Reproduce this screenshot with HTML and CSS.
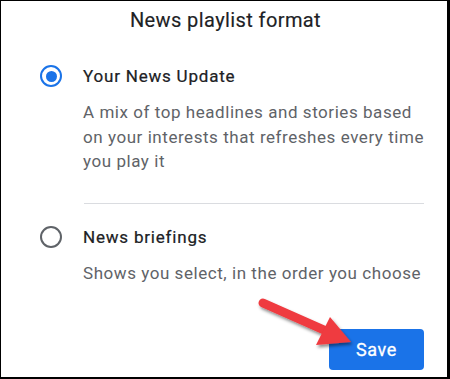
FILE: index.html
```html
<!DOCTYPE html>
<html>
<head>
<meta charset="utf-8">
<link rel="stylesheet" href="styles.css">
</head>
<body>
<div class="frame">
  <h1 class="title">News playlist format</h1>
  <div class="option">
    <span class="radio radio-on"></span>
    <div class="label">Your News Update</div>
    <div class="desc">A mix of top headlines and stories based on your interests that refreshes every time you play it</div>
  </div>
  <div class="divider"></div>
  <div class="option option-2">
    <span class="radio"></span>
    <div class="label">News briefings</div>
    <div class="desc">Shows you select, in the order you choose</div>
  </div>
  <div class="actions">
    <button class="save">Save</button>
  </div>
  <svg class="arrow" width="450" height="379" viewBox="0 0 450 379">
    <defs>
      <filter id="sh" x="-20%" y="-20%" width="140%" height="140%">
        <feDropShadow dx="1.5" dy="2.5" stdDeviation="1.6" flood-color="#000" flood-opacity="0.45"/>
      </filter>
    </defs>
    <g filter="url(#sh)" fill="#ef3a3f" stroke="none">
      <line x1="263" y1="303" x2="324" y2="330" stroke="#ef3a3f" stroke-width="9" stroke-linecap="round"/>
      <polygon points="330,317 351,342 316,345"/>
    </g>
  </svg>
</div>
</body>
</html>
```

FILE: styles.css
```css
* { box-sizing: border-box; }
html, body { margin: 0; padding: 0; background: #fff; }
body { font-family: Roboto, "Noto Sans", sans-serif; }
.frame {
  position: relative;
  width: 450px;
  height: 379px;
  border-style: solid;
  border-color: #000;
  border-width: 1px 3px 2px 1px;
  background: #fff;
  padding: 7px 20px 0 39px;
  overflow: hidden;
}
.title {
  margin: 0 0 32px -16px;
  text-align: center;
  font-size: 20px;
  line-height: 24px;
  font-weight: 400;
  color: #202124;
  letter-spacing: 0.4px;
  -webkit-text-stroke: 0.15px #202124;
}
.option {
  display: grid;
  grid-template-columns: 22px 1fr;
  column-gap: 21px;
  row-gap: 12px;
}
.radio {
  width: 22px;
  height: 22px;
  border-radius: 50%;
  border: 2.5px solid #5f6368;
  align-self: center;
  justify-self: center;
  position: relative;
}
.radio-on { border-color: #1a73e8; }
.radio-on::after {
  content: "";
  position: absolute;
  left: 50%;
  top: 50%;
  width: 11px;
  height: 11px;
  margin: -5.5px 0 0 -5.5px;
  border-radius: 50%;
  background: #1a73e8;
}
.label {
  font-size: 17px;
  line-height: 24px;
  font-weight: 400;
  color: #202124;
  letter-spacing: 0.8px;
  -webkit-text-stroke: 0.22px #202124;
}
.desc {
  grid-column: 2;
  font-size: 17px;
  line-height: 24.5px;
  color: #5f6368;
  letter-spacing: 0.55px;
}
.divider {
  height: 1px;
  background: #dadce0;
  margin: 29px 3px 21px 44px;
}
.actions {
  display: flex;
  justify-content: flex-end;
  margin: 44px 3px 0 0;
}
.save {
  width: 95px;
  height: 41px;
  border: none;
  border-radius: 4px;
  background: #1a73e8;
  color: #fff;
  font-family: Roboto, "Noto Sans", sans-serif;
  font-size: 18px;
  font-weight: 400;
  -webkit-text-stroke: 0.3px #fff;
  letter-spacing: 0.6px;
  padding: 0;
}
.arrow {
  position: absolute;
  left: -1px;
  top: -1px;
}
```
